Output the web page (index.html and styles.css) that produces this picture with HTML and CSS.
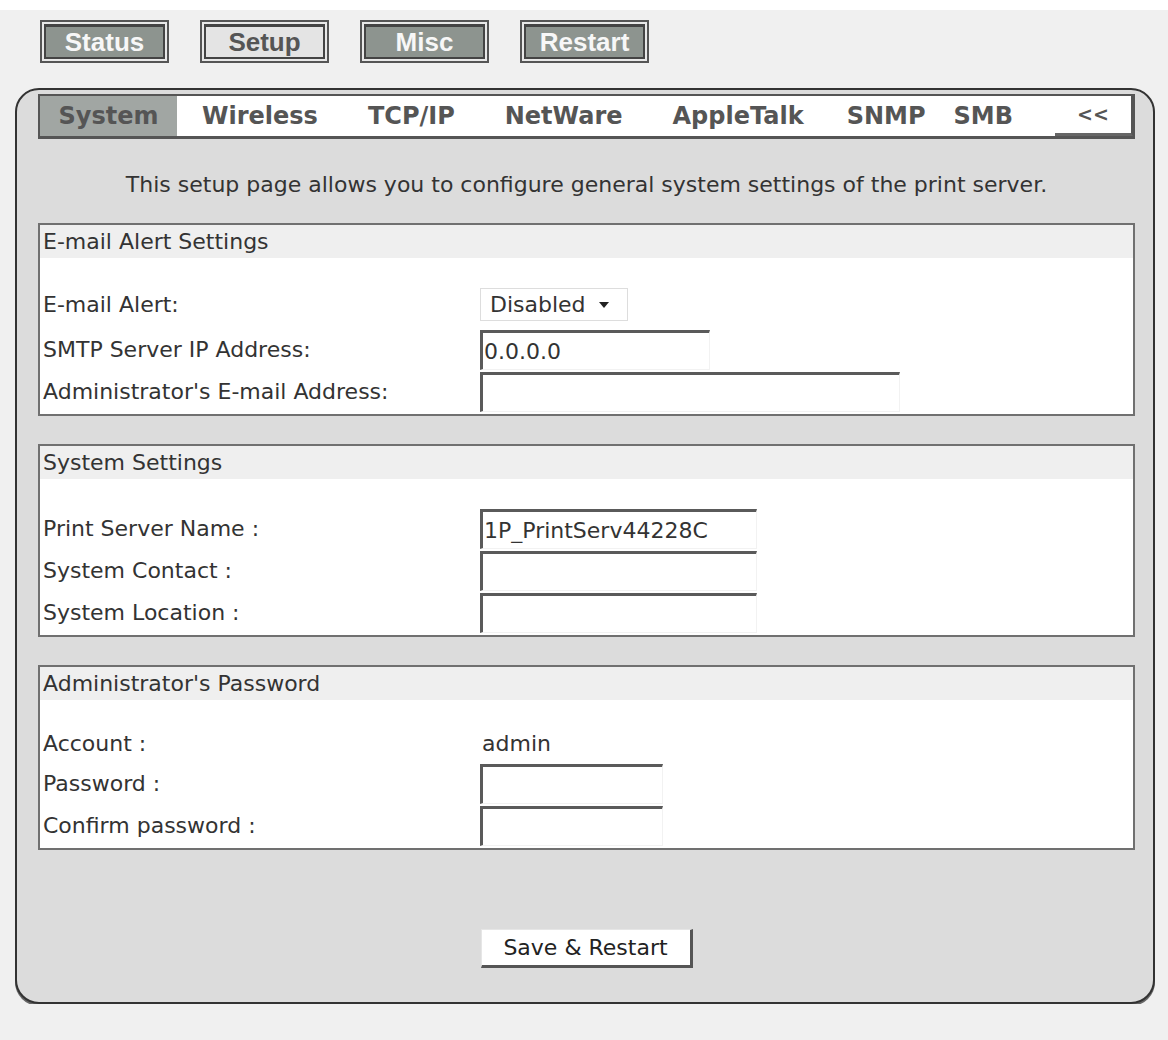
FILE: index.html
```html
<!DOCTYPE html>
<html lang="en">

<head>
    <meta charset="UTF-8">
    <meta name="viewport" content="width=device-width, initial-scale=1.0">
    <title>Print Server - Setup - System</title>
    <link rel="stylesheet" href="styles.css">
</head>

<body>
    <div class="topbar"></div>

    <div class="nav">
        <a class="nav-btn">Status</a>
        <a class="nav-btn current">Setup</a>
        <a class="nav-btn">Misc</a>
        <a class="nav-btn">Restart</a>
    </div>

    <div class="panel">
        <div class="tabs">
            <span class="tab current">System</span>
            <span class="tab">Wireless</span>
            <span class="tab">TCP/IP</span>
            <span class="tab">NetWare</span>
            <span class="tab">AppleTalk</span>
            <span class="tab snmp">SNMP</span>
            <span class="tab smb">SMB</span>
            <span class="tab back">&lt;&lt;</span>
        </div>

        <p class="intro">This setup page allows you to configure general system settings of the print server.</p>

        <div class="group">
            <div class="group-title">E-mail Alert Settings</div>
            <div class="group-body">
                <div class="row select-row">
                    <label>E-mail Alert:</label>
                    <div class="select">Disabled
                        <svg width="12" height="8" viewBox="0 0 12 8"><path d="M1 1h10L6 7z" fill="#222"/></svg>
                    </div>
                </div>
                <div class="row">
                    <label>SMTP Server IP Address:</label>
                    <input class="field w-ip" type="text" value="0.0.0.0">
                </div>
                <div class="row">
                    <label>Administrator's E-mail Address:</label>
                    <input class="field w-mail" type="text" value="">
                </div>
            </div>
        </div>

        <div class="group">
            <div class="group-title">System Settings</div>
            <div class="group-body">
                <div class="row">
                    <label>Print Server Name :</label>
                    <input class="field w-name" type="text" value="1P_PrintServ44228C">
                </div>
                <div class="row">
                    <label>System Contact :</label>
                    <input class="field w-name" type="text" value="">
                </div>
                <div class="row">
                    <label>System Location :</label>
                    <input class="field w-name" type="text" value="">
                </div>
            </div>
        </div>

        <div class="group">
            <div class="group-title">Administrator's Password</div>
            <div class="group-body">
                <div class="row short">
                    <label>Account :</label>
                    <span class="value">admin</span>
                </div>
                <div class="row">
                    <label>Password :</label>
                    <input class="field w-pass" type="password" value="">
                </div>
                <div class="row">
                    <label>Confirm password :</label>
                    <input class="field w-pass" type="password" value="">
                </div>
            </div>
        </div>

        <div class="actions">
            <button class="save">Save &amp; Restart</button>
        </div>
    </div>
</body>

</html>
```

FILE: styles.css
```css
body {
    margin: 0;
    padding: 0;
    background-color: #f0f0f0;
    font-family: "DejaVu Sans", Tahoma, sans-serif;
    color: #333;
}

.topbar {
    height: 10px;
    background-color: #fff;
}

/* top menu buttons */
.nav {
    display: flex;
    gap: 39px;
    padding: 14px 0 0 44px;
}

.nav-btn {
    display: block;
    box-sizing: border-box;
    width: 121px;
    height: 35px;
    line-height: 31px;
    text-align: center;
    font-family: "Liberation Sans", Arial, sans-serif;
    font-weight: bold;
    font-size: 26px;
    color: #f7f7f7;
    background-color: #8d948f;
    border: 2px solid #444;
    border-top-width: 3px;
    box-shadow: 0 0 0 2px #e8e8e8, 0 0 0 4px #555;
    cursor: pointer;
}

.nav-btn.current {
    color: #555;
    background-color: #e4e4e4;
}

/* main rounded panel */
.panel {
    margin: 29px 13px 0 15px;
    padding: 4px 18px 34px 21px;
    background-color: #dcdcdc;
    border: 2px solid #333;
    border-radius: 24px;
    box-shadow: 0 2px 0 #666;
}

.tabs {
    display: flex;
    height: 40px;
    background-color: #fff;
    border-top: 2px solid #555;
    border-left: 2px solid #555;
    border-bottom: 3px solid #555;
    border-right: 2px solid #555;
}

.tab {
    padding: 0 25px;
    line-height: 40px;
    font-weight: bold;
    font-size: 24px;
    color: #555;
    cursor: pointer;
}

.tab.current {
    box-sizing: border-box;
    width: 137px;
    padding: 0;
    text-align: center;
    background-color: #a1a6a3;
}

.tab.snmp {
    padding: 0 14px 0 18px;
}

.tab.smb {
    padding: 0 14px;
}

.tab.back {
    margin-left: auto;
    box-sizing: border-box;
    width: 78px;
    padding: 0;
    font-size: 19px;
    text-align: center;
    border-right: 2px solid #555;
    border-bottom: 3px solid #666;
    line-height: 37px;
}

.intro {
    margin: 32px 0 24px;
    line-height: 28px;
    text-align: center;
    font-size: 22px;
}

/* setting groups */
.group {
    margin-top: 28px;
    border: 2px solid #707070;
    background-color: #fff;
}

.intro + .group {
    margin-top: 0;
}

.group-title {
    height: 33px;
    line-height: 33px;
    padding-left: 3px;
    font-size: 22px;
    background-color: #efefef;
}

.group-body {
    padding-top: 30px;
}

.row {
    display: grid;
    grid-template-columns: 440px 1fr;
    align-items: start;
    height: 42px;
    font-size: 22px;
}

.row label {
    padding-left: 3px;
    line-height: 40px;
}

.row.select-row label {
    line-height: 33px;
}

.row.short {
    height: 34px;
}

.row.short label,
.value {
    line-height: 28px;
}

.value {
    padding-left: 2px;
}

.select {
    display: flex;
    align-items: center;
    gap: 12px;
    box-sizing: border-box;
    width: 148px;
    height: 33px;
    padding-left: 9px;
    background-color: #fff;
    border: 1px solid #ddd;
    color: #333;
}

.field {
    box-sizing: border-box;
    height: 40px;
    padding: 0 0 0 1px;
    font-family: "DejaVu Sans", Tahoma, sans-serif;
    font-size: 22px;
    color: #333;
    background-color: #fff;
    border-top: 3px solid #5a5a5a;
    border-left: 3px solid #5a5a5a;
    border-right: 1px solid #f2f2f2;
    border-bottom: 1px solid #f2f2f2;
    outline: none;
}

.w-ip {
    width: 230px;
}

.w-mail {
    width: 420px;
}

.w-name {
    width: 277px;
}

.w-pass {
    width: 183px;
}

.actions {
    margin-top: 79px;
    text-align: center;
}

.save {
    box-sizing: border-box;
    width: 212px;
    height: 39px;
    font-family: "DejaVu Sans", Tahoma, sans-serif;
    font-size: 22px;
    color: #222;
    background-color: #fff;
    border-top: 1px solid #e6e6e6;
    border-left: 1px solid #e6e6e6;
    border-right: 3px solid #555;
    border-bottom: 3px solid #555;
    cursor: pointer;
}
```
